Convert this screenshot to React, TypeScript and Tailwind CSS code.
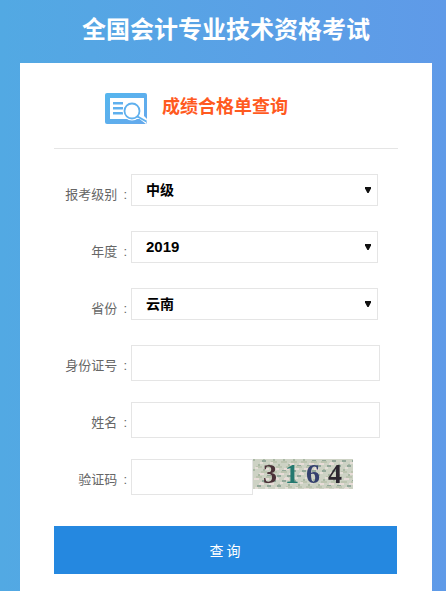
import React from 'react';

const CJK = "font-['Liberation_Sans','Noto_Sans_CJK_SC',sans-serif]";

const selects = [
  { label: '报考级别', value: '中级', size: 'text-[14px]' },
  { label: '年度', value: '2019', size: 'text-[15px]' },
  { label: '省份', value: '云南', size: 'text-[14px]' },
];

function Label({ text }: { text: string }) {
  return (
    <label className="block w-[77px] shrink-0 whitespace-nowrap pr-[4px] text-right text-[13px] leading-5 text-[#666666]">
      {text}
      <span className="ml-[6px]">:</span>
    </label>
  );
}

function SearchDocIcon() {
  return (
    <svg width="42" height="31" viewBox="0 0 42 31" className="shrink-0">
      <defs>
        <linearGradient id="doc" x1="0" y1="0" x2="1" y2="1">
          <stop offset="0" stopColor="#55b6ee" />
          <stop offset="1" stopColor="#65a8ec" />
        </linearGradient>
      </defs>
      <rect width="42" height="31" rx="2" fill="url(#doc)" />
      <rect x="5" y="5" width="34" height="21" fill="#ffffff" />
      <rect x="8" y="9" width="10" height="2.5" fill="#5fb0ee" />
      <rect x="8" y="14" width="10" height="2.5" fill="#5fb0ee" />
      <rect x="8" y="19" width="10" height="2.5" fill="#5fb0ee" />
      <path d="M32 24 L41 31 L42 26 L36 20 Z" fill="#ffffff" />
      <circle cx="27" cy="18" r="9.5" fill="#ffffff" />
      <circle cx="27" cy="18" r="7.5" fill="#ffffff" stroke="#5fb0ee" strokeWidth="1.8" />
      <path d="M32.5 23.5 L40.5 28" stroke="#5fb0ee" strokeWidth="2" strokeLinecap="round" />
    </svg>
  );
}

function Captcha() {
  const specks = Array.from({ length: 170 }, (_, i) => ({
    x: (i * 37) % 100,
    y: (i * 13) % 30,
    w: 2 + (i % 5),
    color: ['#a9b9a4', '#e4ded7', '#93a89a', '#e8dcd8', '#bcc4b0'][i % 5],
  }));
  return (
    <div className="relative h-[30px] w-[100px] shrink-0 overflow-hidden bg-[#cdd2c4]">
      <svg width="100" height="30" className="absolute inset-0 blur-[0.6px]">
        {specks.map((s, i) => (
          <rect key={i} x={s.x} y={s.y} width={s.w} height="2" fill={s.color} />
        ))}
      </svg>
      <div className="relative flex h-full items-center pl-[10px] font-['Liberation_Serif',serif] text-[28px] font-bold leading-none blur-[0.5px]">
        <span className="w-[22px] text-[#4a3238]">3</span>
        <span className="w-[21px] text-[#24796f]">1</span>
        <span className="w-[22px] text-[#34406e]">6</span>
        <span className="text-[#2c2630]">4</span>
      </div>
    </div>
  );
}

export default function App() {
  return (
    <div className={`h-[591px] w-[446px] overflow-hidden bg-gradient-to-r from-[#52a9e3] to-[#5f9ae8] ${CJK}`}>
      <h1 className="h-[63px] pl-[6px] pt-[12px] text-center text-[24px] font-bold leading-[36px] text-white">
        全国会计专业技术资格考试
      </h1>
      <div className="mx-[20px] h-[528px] w-[412px] bg-white px-[34px]">
        <div className="flex h-[86px] items-start gap-[15px] border-b border-[#e5e5e5] pl-[51px] pt-[30px]">
          <SearchDocIcon />
          <h2 className="pt-[1px] text-[18px] font-bold leading-[27px] text-[#ff5a1f]">成绩合格单查询</h2>
        </div>

        <form className="mt-[25px] flex flex-col">
          {selects.map((s) => (
            <div key={s.label} className="mb-[25px] flex h-[32px] items-start">
              <div className="pt-[11px]">
                <Label text={s.label} />
              </div>
              <div className="relative">
                <select
                  defaultValue={s.value}
                  className={`h-[32px] w-[247px] appearance-none border border-[#e5e5e5] bg-white pl-[14px] pt-[1px] font-bold text-black ${s.size}`}
                >
                  <option>{s.value}</option>
                </select>
                <svg width="6" height="6" viewBox="0 0 6 6" className="absolute right-[7px] top-[13px]">
                  <path d="M0 0 H6 V1.5 L3.6 6 H2.4 L0 1.5 Z" fill="#111111" />
                </svg>
              </div>
            </div>
          ))}

          <div className="mb-[21px] flex h-[36px] items-start">
            <div className="pt-[11px]">
              <Label text="身份证号" />
            </div>
            <input type="text" className="h-[36px] w-[249px] border border-[#e5e5e5]" />
          </div>
          <div className="mb-[21px] flex h-[36px] items-start">
            <div className="pt-[11px]">
              <Label text="姓名" />
            </div>
            <input type="text" className="h-[36px] w-[249px] border border-[#e5e5e5]" />
          </div>
          <div className="flex h-[36px] items-start">
            <div className="pt-[11px]">
              <Label text="验证码" />
            </div>
            <input type="text" className="h-[36px] w-[122px] border border-[#e5e5e5]" />
            <Captcha />
          </div>

          <button
            type="button"
            className="mt-[31px] h-[48px] w-[343px] bg-[#2588e0] pl-[2px] pt-[2px] text-[14px] tracking-[3px] text-white"
          >
            查询
          </button>
        </form>
      </div>
    </div>
  );
}
